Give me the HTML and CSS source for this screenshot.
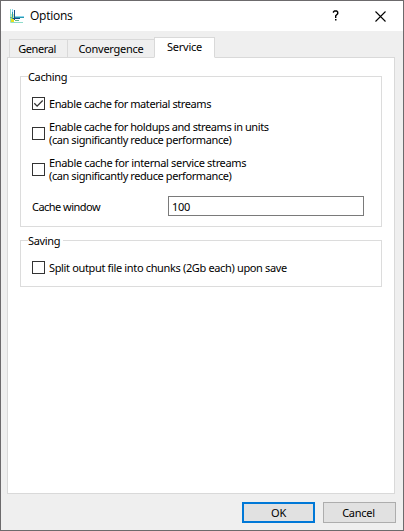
FILE: index.html
```html
<!DOCTYPE html>
<html lang="en">
<head>
<meta charset="utf-8">
<title>Options</title>
<link rel="stylesheet" href="styles.css">
</head>
<body>
<div class="window">
  <header class="titlebar">
    <svg class="logo" width="16" height="16" viewBox="0 0 16 16" shape-rendering="crispEdges">
      <path fill="#d3edb0" d="M1 6h4v9H1z"/>
      <path fill="#e6e21c" d="M2 10h3v4H2z"/>
      <path fill="#8fdccb" d="M1 1h1v13H1zM2 14h12v1H2z"/>
      <path fill="#8ed4ee" d="M5 8h10v1H5zM3 1h1v9H3z"/>
      <path fill="#2b9bb0" d="M3 4h1v7H3zM6 9h9v1H6z"/>
      <path fill="#174f86" d="M5 2h1v10H5zM4 10h7v1H4z"/>
      <path fill="#65b78a" d="M1 9h3v1H1zM6 12h4v1H6z"/>
    </svg>
    <h1 class="title">Options</h1>
    <svg class="help" width="8" height="12" viewBox="0 0 8 12" fill="none" stroke="#000" stroke-width="1.4">
      <path d="M1.5 2.8V1.8L2.5 1h2.2l1 1v1.8L3.7 5.8V8M3 9.7h1.5"/>
    </svg>
    <svg class="close" width="11" height="11" viewBox="0 0 11 11" fill="none" stroke="#000" stroke-width="1.1">
      <path d="M.5.5l10 10M10.5.5l-10 10"/>
    </svg>
  </header>
  <nav class="tabs">
    <div class="tab general">General</div>
    <div class="tab convergence">Convergence</div>
    <div class="tab active">Service</div>
  </nav>
  <main class="pane">
    <fieldset class="group caching">
      <legend>Caching</legend>
      <label class="option first">
        <span class="box"><svg width="11" height="11" viewBox="0 0 11 11"><path d="M1.3 5.3l2.8 2.8 5.6-5.6" fill="none" stroke="#333" stroke-width="1.3"/></svg></span>
        <span class="text">Enable cache for material streams</span>
      </label>
      <label class="option second">
        <span class="box"></span>
        <span class="lines"><span class="text">Enable cache for holdups and streams in units</span><span class="text">(can significantly reduce performance)</span></span>
      </label>
      <label class="option third">
        <span class="box"></span>
        <span class="lines"><span class="text wide">Enable cache for internal service streams</span><span class="text">(can significantly reduce performance)</span></span>
      </label>
      <div class="field"><span class="field-name">Cache window</span><div class="input">100</div></div>
    </fieldset>
    <fieldset class="group saving">
      <legend>Saving</legend>
      <label class="option"><span class="box"></span><span class="text wide">Split output file into chunks (2Gb each) upon save</span></label>
    </fieldset>
  </main>
  <footer class="actions">
    <div class="button default">OK</div>
    <div class="button cancel">Cancel</div>
  </footer>
</div>
</body>
</html>
```
FILE: styles.css
```css
* { box-sizing: border-box; }
body {
  margin: 0;
  font: 11px/13px "Noto Sans", "Open Sans", sans-serif;
  letter-spacing: -0.25px;
  color: #000;
}
.window {
  width: 404px;
  height: 531px;
  border: 1px solid #6c6a6c;
  background: #efefef;
  display: flex;
  flex-direction: column;
}
.titlebar {
  height: 30px;
  background: #fff;
  display: flex;
  align-items: center;
  padding: 0 17px 0 8px;
}
.logo { margin-right: 5px; }
.title {
  margin: 0;
  flex: 1;
  font: 400 12px/16px "Open Sans", sans-serif;
  letter-spacing: -0.25px;
}
.help { margin-right: 35px; }
.tabs {
  height: 27px;
  padding-left: 8px;
  margin-bottom: -1px;
  display: flex;
  align-items: flex-end;
  z-index: 1;
}
.tab {
  height: 19px;
  border: 1px solid #d9d9d9;
  text-align: center;
  padding-top: 2px;
}
.general { width: 59px; padding-right: 3px; letter-spacing: -0.4px; }
.convergence { width: 88px; margin-left: -1px; }
.active {
  width: 61px;
  height: 21px;
  margin-left: -1px;
  background: #fff;
  border-bottom-color: #fff;
}
.pane {
  width: 388px;
  height: 437px;
  margin-left: 6px;
  border: 1px solid #d9d9d9;
  background: #fff;
  padding: 12px;
}
.group {
  width: 362px;
  margin: 0;
  border: 1px solid #dcdcdc;
  padding: 0 0 0 11px;
  min-width: 0;
}
legend {
  margin-left: -4px;
  padding: 0 3px 0 0;
  height: 13px;
  letter-spacing: -0.35px;
}
.caching { height: 157px; }
.saving { height: 53px; margin-top: 7px; }
.option { display: flex; align-items: center; gap: 4px; }
.box {
  width: 13px;
  height: 13px;
  flex: none;
  border: 1px solid #333;
  background: #fff;
}
.box svg { display: block; }
.first { margin-top: 14px; }
.second { margin-top: 10px; }
.third { margin-top: 10px; }
.saving .option { margin-top: 14px; }
.lines { display: flex; flex-direction: column; }
.text {
  display: block;
  height: 13px;
  white-space: nowrap;
  letter-spacing: -0.41px;
}
.wide { letter-spacing: -0.35px; }
.field {
  display: flex;
  align-items: center;
  height: 20px;
  margin-top: 14px;
}
.field-name { width: 136px; white-space: nowrap; letter-spacing: -0.53px; }
.input {
  width: 196px;
  height: 20px;
  border: 1px solid #7a7a7a;
  padding: 3px 3px;
}
.actions {
  display: flex;
  justify-content: flex-end;
  gap: 8px;
  padding: 8px 7px 0 0;
}
.button {
  width: 73px;
  height: 21px;
  border: 1px solid #adadad;
  background: #e1e1e1;
  display: flex;
  align-items: center;
  justify-content: center;
}
.default { border: 2px solid #0078d7; }
.cancel { padding-right: 2px; }
```
